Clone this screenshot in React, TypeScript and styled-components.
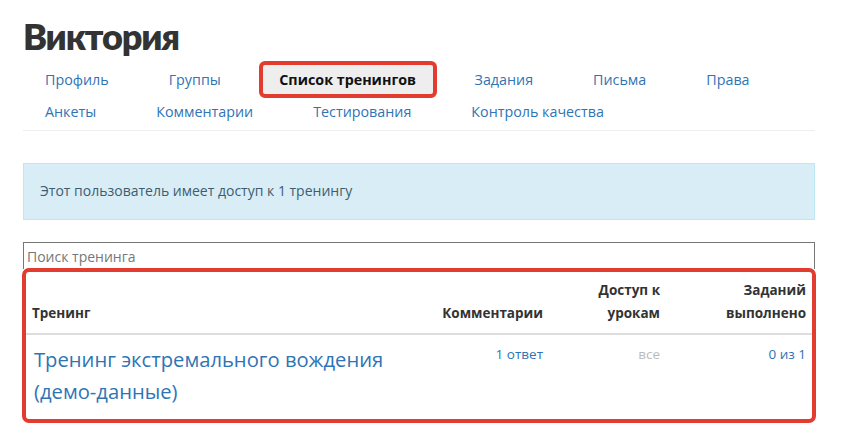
import React from "react";
import styled, { createGlobalStyle } from "styled-components";

const GlobalStyle = createGlobalStyle`
  body {
    margin: 0;
    background: #fff;
    font-family: "Open Sans", "Liberation Sans", sans-serif;
    color: #333;
  }
`;

const Page = styled.div`
  width: 792px;
  padding: 13px 34px 0 23px;
`;

const Title = styled.h1`
  margin: 0;
  font-family: Lato, "Open Sans", sans-serif;
  font-size: 36px;
  line-height: 46px;
  font-weight: 800;
  letter-spacing: -1.2px;
  color: #333;
`;

const Nav = styled.ul`
  display: flex;
  flex-wrap: wrap;
  list-style: none;
  margin: 4px 0 0;
  padding: 0 0 3px;
  border-bottom: 1px solid #eee;
`;

const RowBreak = styled.li`
  flex-basis: 100%;
  height: 0;
`;

const NavItem = styled.li<{ $active?: boolean }>`
  display: flex;
  align-items: center;
  height: 32px;
  padding: 0 22px;
  margin-right: 16px;
  font-size: 14.3px;
  color: ${p => (p.$active ? "#111" : "#2f74b5")};
  font-weight: ${p => (p.$active ? 700 : 400)};
  box-sizing: border-box;
  cursor: pointer;
  ${p =>
    p.$active &&
    `
    padding: 0 16.5px;
    height: 37px;
    margin-top: -2px;
    margin-bottom: -3px;
    background: #eeeeee;
    border: 4px solid #e23b30;
    border-radius: 6px;
  `}
`;

const Alert = styled.div`
  margin-top: 32px;
  padding: 17px 16px 18px;
  background: #d9edf7;
  border: 1px solid #bce8f1;
  color: #3d5d6e;
  font-size: 14px;
  line-height: 20px;
`;

const Search = styled.input`
  display: block;
  width: 100%;
  box-sizing: border-box;
  margin-top: 22px;
  height: 27px;
  padding: 0 3px;
  border: 1px solid #767676;
  border-bottom: none;
  font-family: inherit;
  font-size: 14px;
  color: #333;
  outline: none;
  &::placeholder {
    color: #777;
  }
`;

const TableFrame = styled.div`
  margin: -1px -1px 0;
  border: 4px solid #e23b30;
  border-radius: 7px;
  background: #fff;
`;

const Table = styled.table`
  width: 100%;
  border-collapse: collapse;
`;

const Th = styled.th<{ $left?: boolean; $w?: number }>`
  text-align: ${p => (p.$left ? "left" : "right")};
  vertical-align: bottom;
  width: ${p => (p.$w ? `${p.$w}px` : "auto")};
  padding: 7px 6px 8px;
  font-size: 13.5px;
  line-height: 23px;
  font-weight: 700;
  color: #333;
  border-bottom: 2px solid #ddd;
`;

const Td = styled.td<{ $muted?: boolean }>`
  text-align: right;
  vertical-align: top;
  padding: 9px 6px 0;
  font-size: 13.5px;
  line-height: 20px;
  color: ${p => (p.$muted ? "#bbb" : "#2f74b5")};
`;

const NameCell = styled.td`
  padding: 8px 6px 12px 8px;
  vertical-align: top;
`;

const TrainingLink = styled.a`
  font-size: 20.2px;
  line-height: 32px;
  color: #2f74b5;
  text-decoration: none;
`;

const navRows = [
  ["Профиль", "Группы", "Список тренингов", "Задания", "Письма", "Права"],
  ["Анкеты", "Комментарии", "Тестирования", "Контроль качества"],
];

const App: React.FC = () => {
  return (
    <Page>
      <GlobalStyle />
      <Title>Виктория</Title>
      <Nav>
        {navRows[0].map(item => (
          <NavItem key={item} $active={item === "Список тренингов"}>
            {item}
          </NavItem>
        ))}
        <RowBreak />
        {navRows[1].map(item => (
          <NavItem key={item}>{item}</NavItem>
        ))}
      </Nav>
      <Alert>Этот пользователь имеет доступ к 1 тренингу</Alert>
      <Search placeholder="Поиск тренинга" />
      <TableFrame>
        <Table>
          <thead>
            <tr>
              <Th $left>Тренинг</Th>
              <Th $w={110}>Комментарии</Th>
              <Th $w={105}>
                Доступ к
                <br />
                урокам
              </Th>
              <Th $w={134}>
                Заданий
                <br />
                выполнено
              </Th>
            </tr>
          </thead>
          <tbody>
            <tr>
              <NameCell>
                <TrainingLink href="#">
                  Тренинг экстремального вождения
                  <br />
                  (демо-данные)
                </TrainingLink>
              </NameCell>
              <Td>1 ответ</Td>
              <Td $muted>все</Td>
              <Td>0 из 1</Td>
            </tr>
          </tbody>
        </Table>
      </TableFrame>
    </Page>
  );
};

export default App;
